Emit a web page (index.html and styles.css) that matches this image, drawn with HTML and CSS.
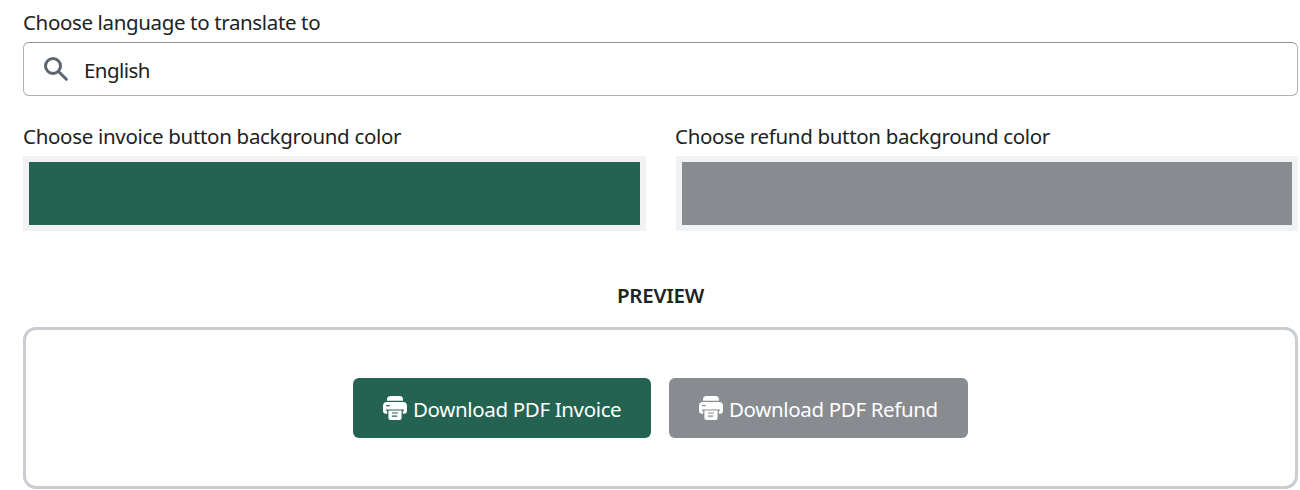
FILE: index.html
```html
<!DOCTYPE html>
<html lang="en">
<head>
<meta charset="utf-8">
<title>Button settings</title>
<link rel="stylesheet" href="styles.css">
</head>
<body>
<main class="settings">
  <div class="label label-language">Choose language to translate to</div>
  <div class="search">
    <svg class="search-icon" viewBox="0 0 24 24"><circle cx="9" cy="9" r="7.5" fill="none" stroke="currentColor" stroke-width="3"/><path d="M14.5 14.5 22.3 22.3" stroke="currentColor" stroke-width="3" stroke-linecap="round"/></svg>
    <span class="search-value">English</span>
  </div>
  <div class="colors">
    <div class="color-field">
      <div class="label label-invoice">Choose invoice button background color</div>
      <div class="swatch swatch-invoice"></div>
    </div>
    <div class="color-field">
      <div class="label label-refund">Choose refund button background color</div>
      <div class="swatch swatch-refund"></div>
    </div>
  </div>
  <h2 class="preview-title">PREVIEW</h2>
  <section class="preview">
    <button class="button button-invoice">
      <svg class="print-icon" viewBox="0 0 24 24" fill="currentColor"><path d="M7.5 0h9A3.5 3.5 0 0 1 20 3.5V4.8H4V3.5A3.5 3.5 0 0 1 7.5 0Z"/><path fill-rule="evenodd" d="M4 6h16a4 4 0 0 1 4 4v4.8a3 3 0 0 1-3 3h-1.2V14.7H21v-1.1H3v1.1h1.2v3.1H3a3 3 0 0 1-3-3V10a4 4 0 0 1 4-4ZM3.7 9h2.6a.6.6 0 0 1 0 1.3H3.7a.6.6 0 0 1 0-1.3Z"/><path fill-rule="evenodd" d="M5.4 14.6h13.2V22a2 2 0 0 1-2 2H7.4a2 2 0 0 1-2-2ZM9 16.4v1.2h6v-1.2ZM9 19.6v1.2h5.2v-1.2Z"/></svg>
      <span>Download PDF Invoice</span>
    </button>
    <button class="button button-refund">
      <svg class="print-icon" viewBox="0 0 24 24" fill="currentColor"><path d="M7.5 0h9A3.5 3.5 0 0 1 20 3.5V4.8H4V3.5A3.5 3.5 0 0 1 7.5 0Z"/><path fill-rule="evenodd" d="M4 6h16a4 4 0 0 1 4 4v4.8a3 3 0 0 1-3 3h-1.2V14.7H21v-1.1H3v1.1h1.2v3.1H3a3 3 0 0 1-3-3V10a4 4 0 0 1 4-4ZM3.7 9h2.6a.6.6 0 0 1 0 1.3H3.7a.6.6 0 0 1 0-1.3Z"/><path fill-rule="evenodd" d="M5.4 14.6h13.2V22a2 2 0 0 1-2 2H7.4a2 2 0 0 1-2-2ZM9 16.4v1.2h6v-1.2ZM9 19.6v1.2h5.2v-1.2Z"/></svg>
      <span>Download PDF Refund</span>
    </button>
  </section>
</main>
</body>
</html>
```
FILE: styles.css
```css
* { box-sizing: border-box; }
body {
  margin: 0;
  background: #fff;
  color: #202223;
  font-family: "Segoe UI", "Noto Sans", "Open Sans", sans-serif;
  font-size: 20.5px;
  line-height: 30px;
  overflow: hidden;
}
.settings { padding: 7px 2px 0 23px; }
.label { height: 35px; white-space: nowrap; }
.label-language { letter-spacing: -0.36px; }
.label-invoice { letter-spacing: -0.31px; }
.label-refund { margin-left: -1px; letter-spacing: -0.33px; }
.search {
  display: flex;
  align-items: center;
  height: 54px;
  padding-left: 20px;
  border: 1px solid #aeb0b9;
  border-top-color: #898f94;
  border-radius: 6px;
}
.search-icon { width: 24px; height: 24px; color: #5c6670; }
.search-value { margin-left: 16px; padding-top: 1px; letter-spacing: -0.55px; }
.colors {
  display: grid;
  grid-template-columns: 623px 622px;
  gap: 30px;
  margin-top: 25px;
}
.swatch { height: 75px; border: 6px solid #f1f2f4; }
.swatch-invoice { background: #246351; }
.swatch-refund { background: #888b8f; }
.preview-title {
  margin: 49px 0 17px;
  font-size: 20.5px;
  font-weight: 600;
  line-height: 30px;
  text-align: center;
  letter-spacing: -0.25px;
}
.preview {
  display: flex;
  justify-content: center;
  align-items: center;
  gap: 18px;
  height: 162px;
  border: 3px solid #c9ccd1;
  border-radius: 13px;
}
.button {
  display: flex;
  align-items: center;
  height: 60px;
  padding: 0 0 0 30px;
  border: 0;
  border-radius: 6px;
  color: #fff;
  font: inherit;
  letter-spacing: -0.35px;
  white-space: nowrap;
}
.button span { padding-top: 2px; }
.button-invoice { width: 298px; background: #246351; }
.button-refund { width: 299px; background: #888b8f; }
.print-icon { width: 24px; height: 24px; flex: none; margin-right: 6px; }
```
